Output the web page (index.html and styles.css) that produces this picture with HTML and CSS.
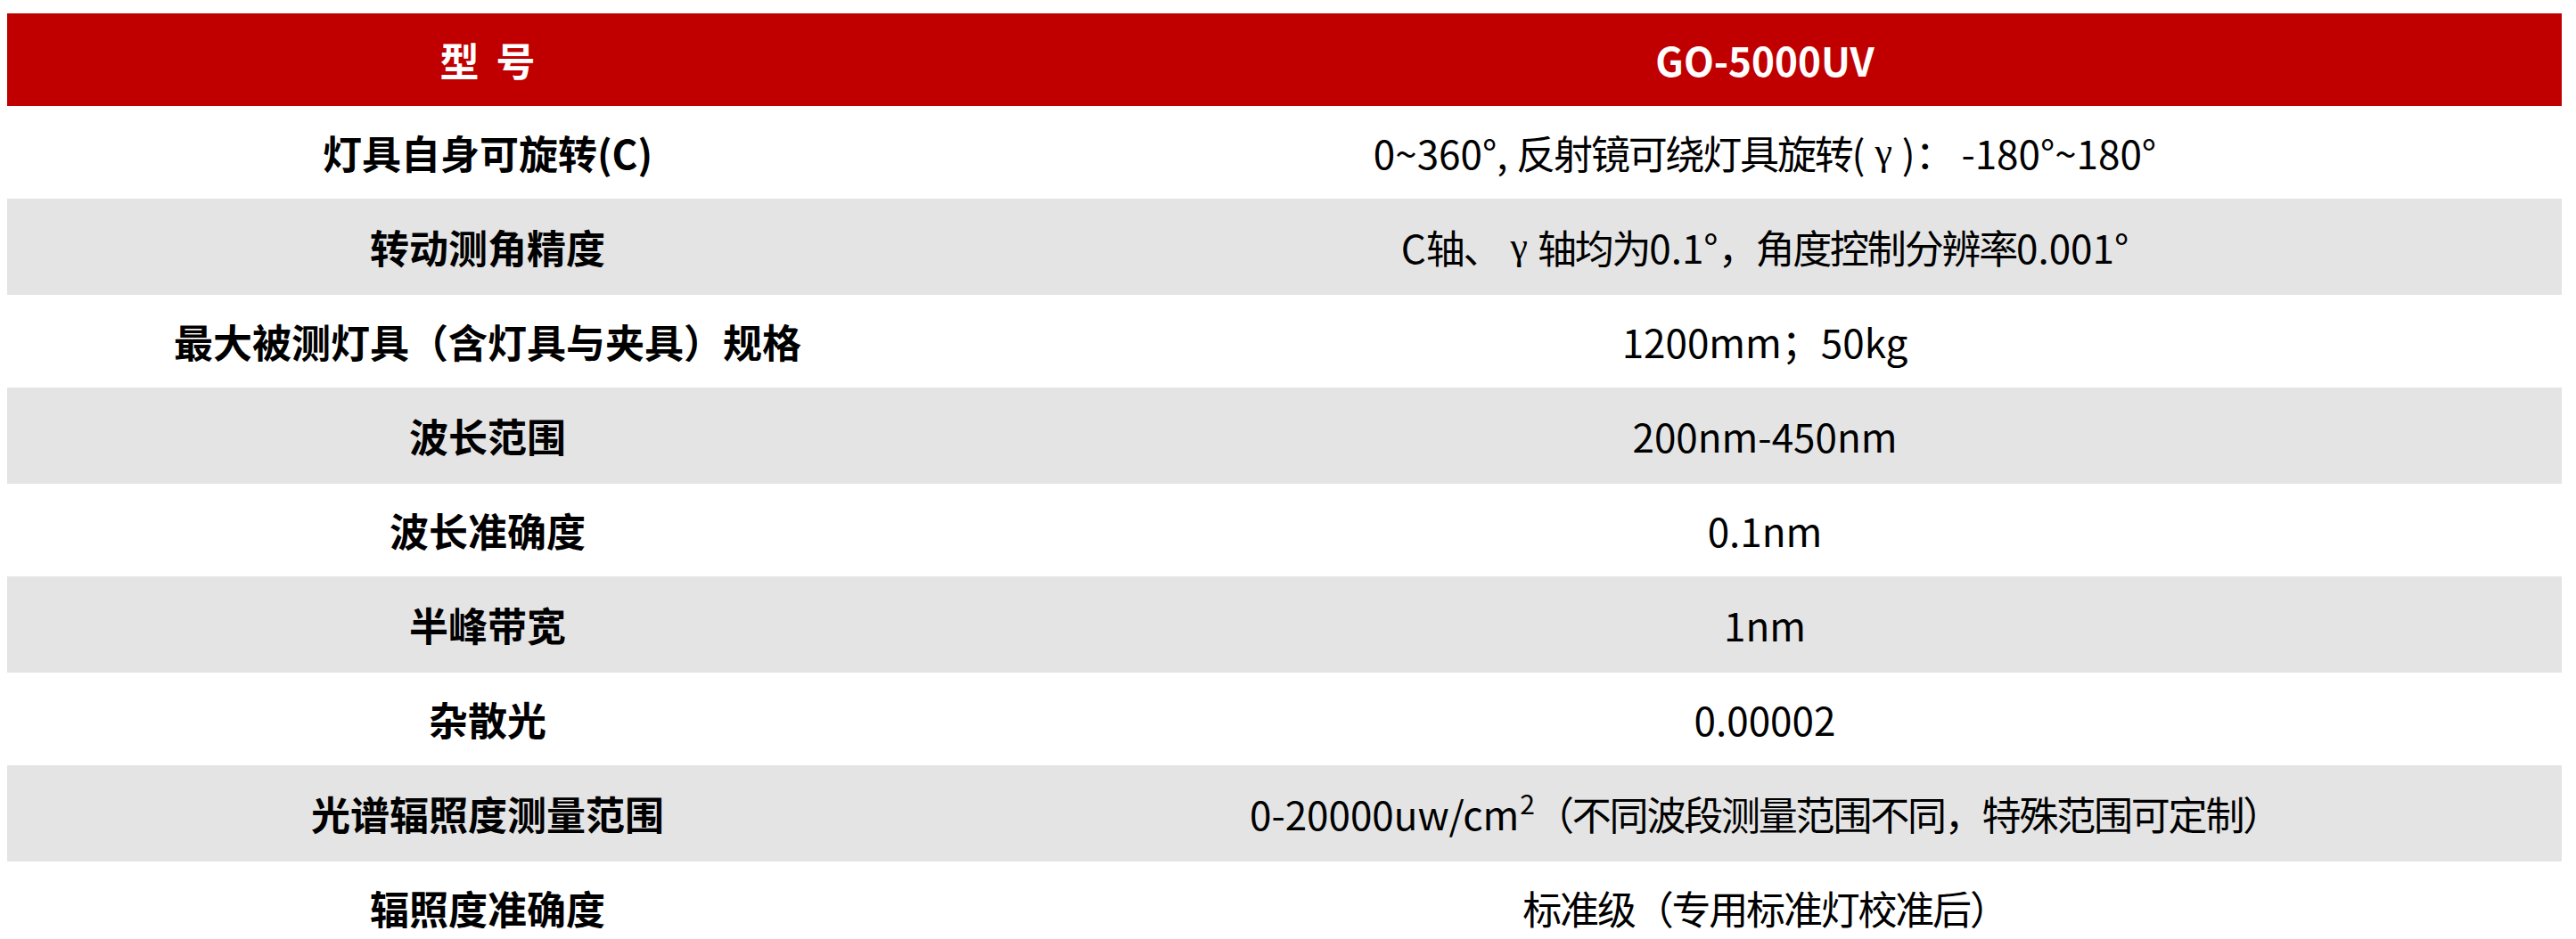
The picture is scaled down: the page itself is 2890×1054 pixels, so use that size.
FILE: index.html
```html
<!DOCTYPE html>
<html lang="zh-CN">
<head>
<meta charset="utf-8">
<title>GO-5000UV 参数</title>
<link rel="stylesheet" href="styles.css">
</head>
<body>
<div class="spec-table">
  <div class="row head">
    <div class="cell model-label">型 号</div>
    <div class="cell">GO-5000UV</div>
  </div>
  <div class="row odd">
    <div class="cell label">灯具自身可旋转(C)</div>
    <div class="cell value">0~360°, <span class="zh">反射镜可绕灯具旋转</span>(<span class="greek"> γ </span>)<span class="zh">：</span>&nbsp;-180°~180°</div>
  </div>
  <div class="row even">
    <div class="cell label">转动测角精度</div>
    <div class="cell value">C<span class="zh">轴、</span><span class="greek"> γ </span><span class="zh">轴均为</span>0.1°<span class="zh">，角度控制分辨率</span>0.001°</div>
  </div>
  <div class="row odd">
    <div class="cell label">最大被测灯具（含灯具与夹具）规格</div>
    <div class="cell value">1200mm；50kg</div>
  </div>
  <div class="row even">
    <div class="cell label">波长范围</div>
    <div class="cell value">200nm-450nm</div>
  </div>
  <div class="row odd">
    <div class="cell label">波长准确度</div>
    <div class="cell value">0.1nm</div>
  </div>
  <div class="row even">
    <div class="cell label">半峰带宽</div>
    <div class="cell value">1nm</div>
  </div>
  <div class="row odd">
    <div class="cell label">杂散光</div>
    <div class="cell value">0.00002</div>
  </div>
  <div class="row even">
    <div class="cell label">光谱辐照度测量范围</div>
    <div class="cell value">0-20000uw/cm<sup class="sup">2</sup><span class="zh">（不同波段测量范围不同，特殊范围可定制）</span></div>
  </div>
  <div class="row odd">
    <div class="cell label">辐照度准确度</div>
    <div class="cell value"><span class="zh">标准级（专用标准灯校准后）</span></div>
  </div>
</div>
</body>
</html>
```

FILE: styles.css
```css
html, body {
  background: #ffffff;
}

body {
  margin: 15px 16px 0 8px;
  font-family: "Noto Sans CJK SC", "Noto Sans", sans-serif;
  font-size: 44px;
  color: #000000;
}

.spec-table {
  display: flex;
  flex-direction: column;
}

.row {
  display: grid;
  grid-template-columns: 1078px 1fr;
  align-items: center;
}

.cell {
  display: flex;
  align-items: center;
  justify-content: center;
  white-space: pre;
  line-height: 1;
}

.head {
  background: #c00000;
  color: #ffffff;
  font-weight: 700;
  height: 104px;
}

.model-label {
  word-spacing: 9px;
}

.odd {
  background: #ffffff;
  height: 104px;
}

.even {
  background: #e4e4e4;
  height: 108px;
}

.label {
  font-weight: 700;
}

.value {
  font-weight: 400;
}

.zh {
  letter-spacing: -2.2px;
}

.greek {
  font-family: "Liberation Serif", "DejaVu Serif", serif;
  white-space: pre;
}

.sup {
  font-size: 30px;
  line-height: 0;
  position: relative;
  top: -12px;
  vertical-align: baseline;
  margin-left: 1px;
}
```
